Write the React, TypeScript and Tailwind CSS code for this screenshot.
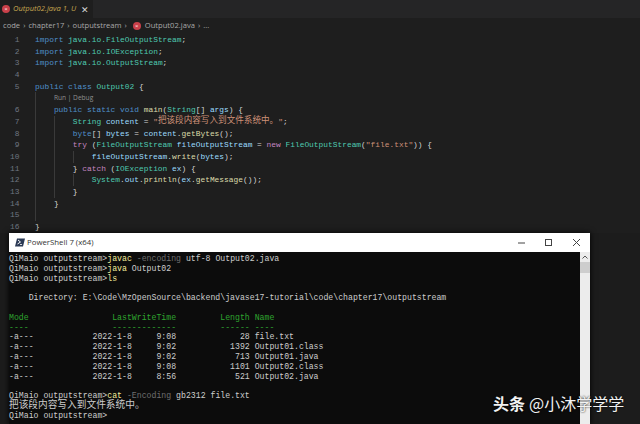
type Tok = [string, string];

const KW = "text-[#4f8fc9]";
const CT = "text-[#c586c0]";
const TP = "text-[#4ec9b0]";
const VR = "text-[#9cdcfe]";
const FN = "text-[#dcdcaa]";
const ST = "text-[#ce9178]";
const PL = "text-[#d4d4d4]";

const code: { n?: number; guides: number; toks?: Tok[]; lens?: boolean }[] = [
  { n: 1, guides: 0, toks: [["import ", KW], ["java.io.FileOutputStream", TP], [";", PL]] },
  { n: 2, guides: 0, toks: [["import ", KW], ["java.io.IOException", TP], [";", PL]] },
  { n: 3, guides: 0, toks: [["import ", KW], ["java.io.OutputStream", TP], [";", PL]] },
  { n: 4, guides: 0 },
  { n: 5, guides: 0, toks: [["public class ", KW], ["Output02 ", TP], ["{", PL]] },
  { guides: 1, lens: true },
  { n: 6, guides: 1, toks: [["public static void ", KW], ["main", FN], ["(", PL], ["String", TP], ["[] ", PL], ["args", VR], [") {", PL]] },
  { n: 7, guides: 2, toks: [["String ", TP], ["content", VR], [" = ", PL], ["\"", ST], ["把该段内容写入到文件系统中。", "text-[#ce9178] text-[8.6px]"], ["\"", ST], [";", PL]] },
  { n: 8, guides: 2, toks: [["byte", KW], ["[] ", PL], ["bytes", VR], [" = ", PL], ["content", VR], [".", PL], ["getBytes", FN], ["();", PL]] },
  { n: 9, guides: 2, toks: [["try ", CT], ["(", PL], ["FileOutputStream ", TP], ["fileOutputStream", VR], [" = ", PL], ["new ", CT], ["FileOutputStream", TP], ["(", PL], ["\"file.txt\"", ST], [")) {", PL]] },
  { n: 10, guides: 3, toks: [["fileOutputStream", VR], [".", PL], ["write", FN], ["(", PL], ["bytes", VR], [");", PL]] },
  { n: 11, guides: 2, toks: [["} ", PL], ["catch ", CT], ["(", PL], ["IOException ", TP], ["ex", VR], [") {", PL]] },
  { n: 12, guides: 3, toks: [["System", TP], [".", PL], ["out", VR], [".", PL], ["println", FN], ["(", PL], ["ex", VR], [".", PL], ["getMessage", FN], ["());", PL]] },
  { n: 13, guides: 2, toks: [["}", PL]] },
  { n: 14, guides: 1, toks: [["}", PL]] },
  { n: 15, guides: 1 },
  { n: 16, guides: 0, toks: [["}", PL]] },
];

const WH = "text-[#cccccc]";
const YE = "text-[#f2eb9a]";
const GY = "text-[#6f6f6f]";
const GR = "text-[#2fa52f]";

const term: Tok[][] = [
  [["QiMaio outputstream>", WH], ["javac", YE], [" -encoding", GY], [" utf-8 Output02.java", WH]],
  [["QiMaio outputstream>", WH], ["java", YE], [" Output02", WH]],
  [["QiMaio outputstream>", WH], ["ls", YE]],
  [],
  [["    Directory: E:\\Code\\MzOpenSource\\backend\\javase17-tutorial\\code\\chapter17\\outputstream", WH]],
  [],
  [["Mode                 LastWriteTime         Length Name", GR]],
  [["----                 -------------         ------ ----", GR]],
  [["-a---            2022-1-8     9:08             28 file.txt", WH]],
  [["-a---            2022-1-8     9:02           1392 Output01.class", WH]],
  [["-a---            2022-1-8     9:02            713 Output01.java", WH]],
  [["-a---            2022-1-8     9:08           1101 Output02.class", WH]],
  [["-a---            2022-1-8     8:56            521 Output02.java", WH]],
  [],
  [["QiMaio outputstream>", WH], ["cat", YE], [" -Encoding", GY], [" gb2312 file.txt", WH]],
  [["把该段内容写入到文件系统中。", "text-[#cccccc] text-[9.7px]"]],
  [["QiMaio outputstream>", WH]],
];

const ErrorDot = () => (
  <span className="flex h-[8px] w-[8px] shrink-0 items-center justify-center rounded-full bg-[#c9404a] text-[6px] leading-none font-bold text-[#f3c6c9]">
    ×
  </span>
);

const App = () => {
  return (
    <div className="relative flex h-[424px] w-[640px] flex-col overflow-hidden bg-[#1c1c1c] font-['Open_Sans',sans-serif]">
      {/* tab bar */}
      <div className="flex h-[18px] shrink-0 bg-[#252526]">
        <div className="flex w-[93px] items-center bg-[#1e1e1e] pl-[2px] text-[7.6px] whitespace-nowrap text-[#c4a44e] italic">
          <ErrorDot />
          <span className="ml-[3px]">Output02.java 1, U</span>
          <span className="ml-[5px] text-[9px] leading-none text-[#d8d8d8] not-italic">✕</span>
        </div>
      </div>
      {/* breadcrumb */}
      <div className="flex h-[15px] shrink-0 items-center gap-[3px] bg-[#1e1e1e] pl-[3px] text-[7.6px] text-[#a9a9a9]">
        <span>code</span>
        <span>›</span>
        <span>chapter17</span>
        <span>›</span>
        <span>outputstream</span>
        <span className="mr-[3px]">›</span>
        <ErrorDot />
        <span className="ml-[1px]">Output02.java</span>
        <span>›</span>
        <span>...</span>
      </div>
      {/* editor */}
      <div className="h-[200px] shrink-0 bg-[#1e1e1e] pt-[1px] font-['Liberation_Mono','Noto_Sans_CJK_SC',monospace] text-[7.88px] leading-[11.7px]">
        {code.map((line, i) => (
          <div key={i} className="flex h-[11.7px] whitespace-pre">
            <span className="w-[19.5px] shrink-0 text-right text-[#6e7681]">{line.n}</span>
            <span className="w-[15.5px] shrink-0" />
            {[1, 2, 3].slice(0, line.guides).map((g) => (
              <span key={g} className="w-[18.9px] shrink-0 border-l border-[#3a3a3a]" />
            ))}
            {line.lens && (
              <span className="font-['Open_Sans',sans-serif] text-[6.6px] text-[#8f8f8f]">Run | Debug</span>
            )}
            {line.toks?.map(([t, c], j) => (
              <span key={j} className={c}>
                {t}
              </span>
            ))}
          </div>
        ))}
      </div>
      {/* PowerShell window */}
      <div className="ml-[9px] flex w-[581px] grow flex-col shadow-[0_0_6px_#000]">
        <div className="flex h-[19px] shrink-0 items-center bg-white pl-[6px] text-[7.8px] text-[#333333]">
          <svg width="10" height="9" viewBox="0 0 10 9" className="shrink-0">
            <path d="M2 0.5h8l-2 8H0z" fill="#2b3a55" />
            <path d="M3 2l2.5 2L2.5 6" fill="none" stroke="#ffffff" strokeWidth="1" />
            <path d="M5 6.5h2" stroke="#ffffff" strokeWidth="0.8" />
          </svg>
          <span className="ml-[2px]">PowerShell 7 (x64)</span>
          <div className="ml-auto flex items-center">
            <svg width="9" height="9" viewBox="0 0 9 9" className="mr-[18px]">
              <path d="M1 5h7" stroke="#444444" />
            </svg>
            <svg width="9" height="9" viewBox="0 0 9 9" className="mr-[19px]">
              <rect x="1.5" y="1.5" width="6" height="6" fill="none" stroke="#444444" />
            </svg>
            <svg width="9" height="9" viewBox="0 0 9 9" className="mr-[9px]">
              <path d="M1 1l7 7M8 1l-7 7" stroke="#444444" />
            </svg>
          </div>
        </div>
        <div className="flex grow">
          <div className="grow bg-[#0c0c0c] pt-[2px] font-['Liberation_Mono','Noto_Sans_CJK_SC',monospace] text-[8.2px] leading-[9.8px] whitespace-pre">
            {term.map((line, i) => (
              <div key={i} className="h-[9.8px]">
                {line.map(([t, c], j) => (
                  <span key={j} className={c}>
                    {t}
                  </span>
                ))}
              </div>
            ))}
          </div>
          <div className="flex w-[10px] shrink-0 flex-col bg-[#ececec]">
            <div className="flex h-[10px] items-center justify-center">
              <svg width="6" height="4" viewBox="0 0 6 4">
                <path d="M0.5 3.5L3 1l2.5 2.5" fill="none" stroke="#555555" />
              </svg>
            </div>
            <div className="h-[11px] bg-[#cdcdcd]" />
          </div>
        </div>
      </div>
      {/* watermark */}
      <div className="absolute top-[392px] left-[493px] flex items-center whitespace-nowrap font-['Noto_Sans_CJK_SC',sans-serif] text-[16px] leading-[22px] text-[#f2f2f2] [text-shadow:0_0_2px_#000]">
        <span className="mr-[4px] font-bold">头条</span>
        <span>@小沐学学学</span>
      </div>
    </div>
  );
};

export default App;
